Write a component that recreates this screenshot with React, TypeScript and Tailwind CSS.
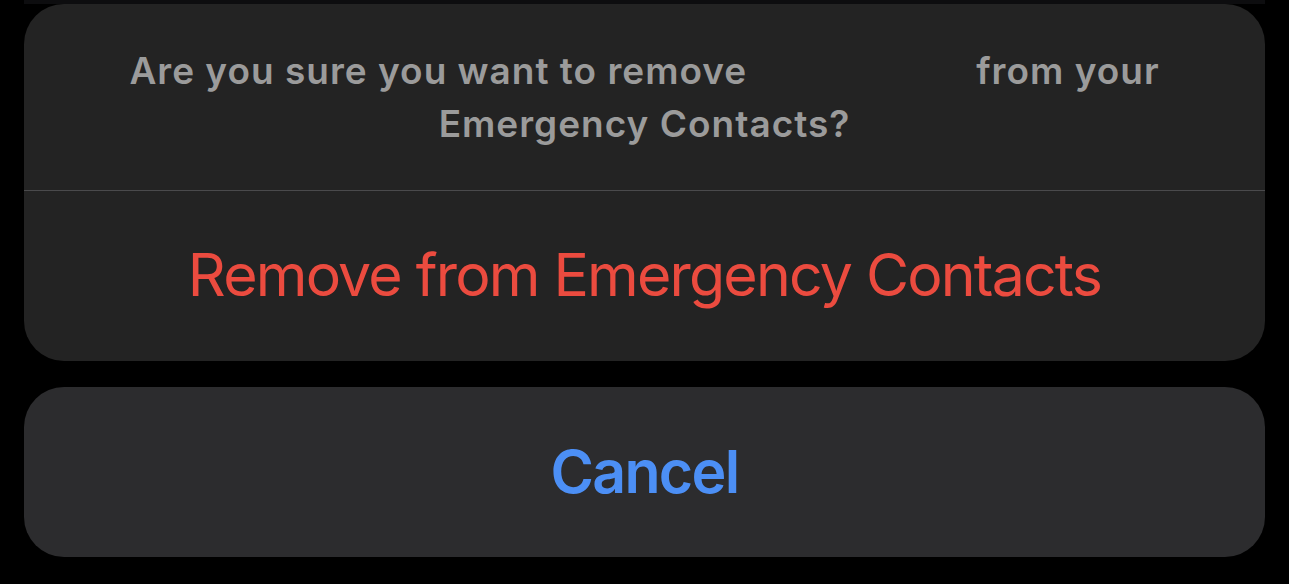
export default function App() {
  return (
    <div
      className="h-[584px] w-[1289px] overflow-hidden bg-black"
      style={{ fontFamily: 'Inter, "Noto Sans", sans-serif' }}
    >
      <div className="mx-[24px] h-[4px] bg-[#0d0d0f]" />
      <div className="mx-[24px] flex flex-col gap-[26px]">
        <section className="overflow-hidden rounded-[40px] bg-[#232323]">
          <div className="flex h-[186px] flex-col items-center justify-center px-[40px] text-center text-[37px] font-semibold leading-[53px] tracking-[1px] text-[#9b9b9b]">
            <p>
              Are you sure you want to remove
              <span className="inline-block w-[229px]" />
              from your
            </p>
            <p>Emergency Contacts?</p>
          </div>
          <div className="h-px bg-[#4a4a4c]" />
          <button className="flex h-[170px] w-full items-center justify-center pb-[2px] text-[59px] tracking-[-1.8px] text-[#eb4b3f]">
            Remove from Emergency Contacts
          </button>
        </section>
        <button className="flex h-[170px] w-full items-center justify-center rounded-[40px] bg-[#2c2c2e] text-[59px] font-semibold tracking-[-1.7px] text-[#4c8ff5]">
          Cancel
        </button>
      </div>
    </div>
  );
}
